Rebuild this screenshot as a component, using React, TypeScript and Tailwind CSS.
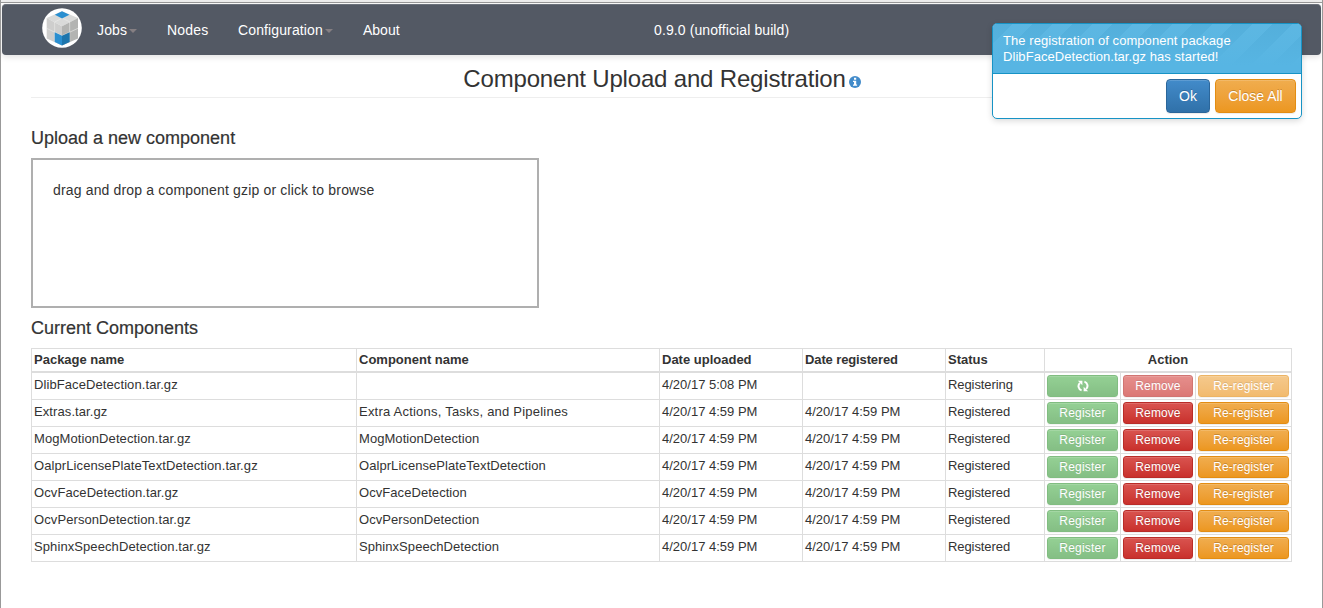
import React from "react";

type Row = {
  pkg: string;
  name: string;
  uploaded: string;
  registered: string;
  status: string;
  busy?: boolean;
};

const at = "4/20/17 4:59 PM";
const rows: Row[] = [
  { pkg: "DlibFaceDetection.tar.gz", name: "", uploaded: "4/20/17 5:08 PM", registered: "", status: "Registering", busy: true },
  { pkg: "Extras.tar.gz", name: "Extra Actions, Tasks, and Pipelines", uploaded: at, registered: at, status: "Registered" },
  { pkg: "MogMotionDetection.tar.gz", name: "MogMotionDetection", uploaded: at, registered: at, status: "Registered" },
  { pkg: "OalprLicensePlateTextDetection.tar.gz", name: "OalprLicensePlateTextDetection", uploaded: at, registered: at, status: "Registered" },
  { pkg: "OcvFaceDetection.tar.gz", name: "OcvFaceDetection", uploaded: at, registered: at, status: "Registered" },
  { pkg: "OcvPersonDetection.tar.gz", name: "OcvPersonDetection", uploaded: at, registered: at, status: "Registered" },
  { pkg: "SphinxSpeechDetection.tar.gz", name: "SphinxSpeechDetection", uploaded: at, registered: at, status: "Registered" },
];

function Logo() {
  return (
    <svg className="-mt-px size-10 shrink-0" viewBox="0 0 40 40">
      <circle cx="20" cy="20" r="19.8" fill="#fff" />
      <path d="M20 3.2 36 10 20 18.2 4.7 10Z" fill="#d9dad9" />
      <path d="M4.7 10 20 18.2V37.4L4.7 30.5Z" fill="#cececd" />
      <path d="M36 10 20 18.2V37.4L36 30.5Z" fill="#b3b4b2" />
      <path
        d="M13 6.5 28 14M27.3 6.5 12.7 14V33.7M27.7 14V33.7M4.7 20.3 20 27.8 36 20.3"
        fill="none"
        stroke="#ececeb"
        strokeWidth="0.6"
      />
      <path d="M20 3.2 27.5 6.8 20 10.4 12.8 6.8Z" fill="#2a8fd0" />
      <path d="M12.7 24.2 20 27.8V37.4L12.7 34.1Z" fill="#2a8fd0" />
      <path d="M27.7 24.2 20 27.8V37.4L27.7 34.1Z" fill="#1d76ad" />
    </svg>
  );
}

function Caret() {
  return <span className="ml-[2px] mt-px border-x-4 border-t-4 border-x-transparent border-t-[#857f82]" />;
}

function RefreshIcon() {
  return (
    <svg className="-mt-px size-[12px]" viewBox="0 0 12 12" fill="none" stroke="#fff" strokeWidth="2">
      <path d="M4.6 10.4A4.4 4.4 0 0 1 3 2.9" />
      <path d="M7.4 1.6A4.4 4.4 0 0 1 9 9.1" />
      <path d="M0.9 0.8H5.4V5.3Z" fill="#fff" stroke="none" />
      <path d="M11.1 11.2H6.6V6.7Z" fill="#fff" stroke="none" />
    </svg>
  );
}

const tones = {
  green: "border-[#3e9a3e] from-[#5cb85c] to-[#449d44]",
  red: "border-[#b92c28] from-[#d9534f] to-[#c9302c]",
  orange: "border-[#e38d13] from-[#f0ad4e] to-[#ec971f]",
  blue: "border-[#2b669a] from-[#428bca] to-[#3071a9]",
};

const btn =
  "flex items-center justify-center border bg-linear-to-b text-white shadow-[inset_0_1px_0_rgba(255,255,255,.15),0_1px_1px_rgba(0,0,0,.075)] [text-shadow:0_-1px_0_rgba(0,0,0,.2)]";

function RowButton({ tone, dim, className, children }: { tone: keyof typeof tones; dim?: boolean; className: string; children: React.ReactNode }) {
  return (
    <button className={`${btn} ${tones[tone]} ${dim ? "opacity-65" : ""} h-[22px] rounded-[3px] text-[12px] leading-[18px] ${className}`}>
      {children}
    </button>
  );
}

const cell = "border-b border-l border-[#ddd] p-0 pl-[2px] align-top";
const head = "border-b-2 border-l border-[#ddd] p-0 pl-[2px] text-left align-top font-bold leading-[21px]";

export default function App() {
  return (
    <div className="flex h-[608px] w-[1323px] flex-col overflow-hidden border-x border-[#999] bg-white font-['Liberation_Sans',Arial,sans-serif] text-[13px] text-[#333]">
      <div className="h-[3px] shrink-0 border-b border-[#999] bg-[#ededed]" />
      <nav className="mx-px mt-px flex h-[51px] shrink-0 items-start rounded-[4px] border-t border-[#6b717b] bg-[#535964] pl-10 text-[14px] leading-5 text-white shadow-[0_2px_6px_rgba(0,0,0,.12)]">
        <div className="pt-1">
          <Logo />
        </div>
        <div className="flex w-[572px] pl-[15px] pt-[15px]">
          <div className="flex w-[70px] items-center">
            <span className="tracking-[0.15px]">Jobs</span>
            <Caret />
          </div>
          <div className="w-[71px] tracking-[0.2px]">Nodes</div>
          <div className="flex w-[125px] items-center">
            <span className="tracking-[0.12px]">Configuration</span>
            <Caret />
          </div>
          <div>About</div>
        </div>
        <div className="pt-[15px] tracking-[0.1px]">0.9.0 (unofficial build)</div>
      </nav>

      <main className="flex flex-col px-[30px]">
        <header className="flex h-[43px] w-[1261px] items-start justify-center border-b border-[#eee] pl-px pt-[9px]">
          <h1 className="text-[24px] leading-[30px] tracking-[-0.18px]">Component Upload and Registration</h1>
          <svg className="ml-[3px] mt-[12px] size-3" viewBox="0 0 12 12">
            <circle cx="6" cy="6" r="6" fill="#428bca" />
            <path d="M5 1.8H7.2V3.7H5ZM4 4.7H7.2V8.5H8.1V9.8H4V8.5H5V5.9H4Z" fill="#fff" />
          </svg>
        </header>

        <h2 className="mt-[30px] text-[18px] leading-5 [-webkit-text-stroke:0.2px_#333]">Upload a new component</h2>
        <div className="mt-[10px] h-[150px] w-[508px] border-2 border-[#afafaf] pl-5 pt-[20px] text-[14px] leading-5 tracking-[0.16px]">
          drag and drop a component gzip or click to browse
        </div>
        <h2 className="mt-[10px] text-[18px] leading-5 [-webkit-text-stroke:0.2px_#333]">Current Components</h2>

        <table className="mt-[10px] w-[1261px] table-fixed border-separate border-spacing-0 border-r border-t border-[#ddd] leading-6">
          <colgroup>
            <col className="w-[325px]" />
            <col className="w-[303px]" />
            <col className="w-[143px]" />
            <col className="w-[143px]" />
            <col className="w-[99px]" />
            <col className="w-[76px]" />
            <col className="w-[75px]" />
            <col className="w-[96px]" />
          </colgroup>
          <thead>
            <tr className="h-6">
              <th className={head}>Package name</th>
              <th className={head}>Component name</th>
              <th className={head}>Date uploaded</th>
              <th className={`${head} tracking-[-0.12px]`}>Date registered</th>
              <th className={head}>Status</th>
              <th className="border-b-2 border-l border-[#ddd] p-0 text-center align-top font-bold leading-[21px]" colSpan={3}>
                Action
              </th>
            </tr>
          </thead>
          <tbody>
            {rows.map((r) => (
              <tr key={r.pkg} className="h-[27px]">
                <td className={`${cell} tracking-[0.09px]`}>{r.pkg}</td>
                <td className={`${cell} ${r.name.includes(" ") ? "tracking-[0.22px]" : "tracking-[0.06px]"}`}>{r.name}</td>
                <td className={cell}>{r.uploaded}</td>
                <td className={cell}>{r.registered}</td>
                <td className={`${cell} tracking-[-0.08px]`}>{r.status}</td>
                <td className={`${cell} pt-[2px]`}>
                  <RowButton tone="green" dim className="w-[71px] tracking-[0.2px]">
                    {r.busy ? <RefreshIcon /> : "Register"}
                  </RowButton>
                </td>
                <td className={`${cell} pt-[2px]`}>
                  <RowButton tone="red" dim={r.busy} className="w-[70px] tracking-[0.1px]">Remove</RowButton>
                </td>
                <td className={`${cell} pt-[2px]`}>
                  <RowButton tone="orange" dim={r.busy} className="w-[91px] tracking-[0.12px]">Re-register</RowButton>
                </td>
              </tr>
            ))}
          </tbody>
        </table>
      </main>

      <div className="absolute left-[992px] top-[23px] h-24 w-[310px] overflow-hidden rounded-[5px] border border-[#1793c5] bg-white shadow-[0_2px_6px_rgba(0,0,0,.15)]">
        <div className="h-[50px] border-b border-[#1793c5] bg-[#57b5e3] bg-[linear-gradient(to_bottom,transparent,#57b5e3_85%),repeating-linear-gradient(135deg,#54afdb_0_14.14px,#5db7e2_14.14px_28.28px)] pl-[10px] pt-[9px] leading-4 tracking-[0.06px] text-white">
          The registration of component package
          <br />
          DlibFaceDetection.tar.gz has started!
        </div>
        <div className="flex justify-end gap-[5px] pr-[5px] pt-[5px] text-[14px]">
          <button className={`${btn} ${tones.blue} h-[34px] w-11 rounded-[4px]`}>Ok</button>
          <button className={`${btn} ${tones.orange} h-[34px] w-[81px] rounded-[4px]`}>Close All</button>
        </div>
      </div>
    </div>
  );
}
